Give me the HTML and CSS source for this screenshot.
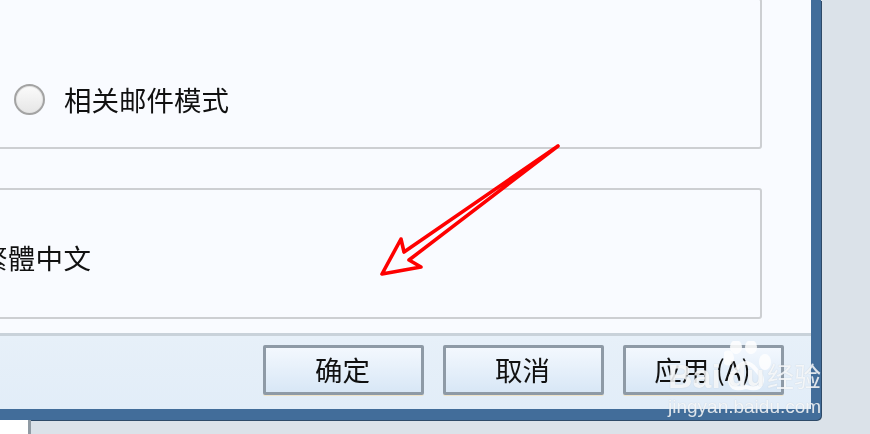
FILE: index.html
```html
<!DOCTYPE html>
<html lang="zh">
<head>
<meta charset="utf-8">
<title>设置</title>
<link rel="stylesheet" href="styles.css">
</head>
<body>
<div class="screen">
  <div class="dialog">
    <div class="body">
      <section class="panel panel-mode">
        <label class="option"><span class="radio"></span><span>相关邮件模式</span></label>
      </section>
      <section class="panel panel-lang">
        <span class="lang">繁體中文</span>
      </section>
    </div>
    <footer class="footer">
      <button class="btn">确定</button>
      <button class="btn">取消</button>
      <button class="btn">应用 (A)</button>
    </footer>
  </div>
  <div class="under">
    <div class="under-sheet"></div>
  </div>

  <svg class="arrow" width="870" height="434" viewBox="0 0 870 434" aria-hidden="true">
    <path d="M558 146 L404 252 L401 239 L382 274 L421 267 L409 260 Z" fill="none" stroke="#fe0000" stroke-width="3.6" stroke-linejoin="round"/>
  </svg>

  <div class="mark">
    <svg class="paw" width="50" height="56" viewBox="0 0 50 56" aria-hidden="true">
      <ellipse cx="4" cy="17" rx="6" ry="7.5"/>
      <ellipse cx="12" cy="6" rx="6" ry="7"/>
      <ellipse cx="27" cy="6" rx="6" ry="7"/>
      <ellipse cx="41" cy="21" rx="6" ry="8"/>
      <path d="M22 22c6 0 8 5 12 9 4 4 5 8 3 12-2 5-8 5-15 3-7 2-13 2-15-3-2-4-1-8 3-12 4-4 6-9 12-9z" fill="none" stroke="#fff" stroke-width="4"/>
    </svg>
    <span class="mark-bai">Bai</span>
    <span class="mark-du">du</span>
    <span class="mark-jy">经验</span>
    <span class="mark-url">jingyan.baidu.com</span>
  </div>
</div>
</body>
</html>
```

FILE: styles.css
```css
* { box-sizing: border-box; }

html, body {
  margin: 0;
  padding: 0;
  width: 870px;
  height: 434px;
  overflow: hidden;
  background: #dbe2e9;
}

.screen {
  position: relative;
  width: 870px;
  height: 434px;
  overflow: hidden;
  font-family: "Noto Sans CJK SC", "Noto Sans CJK TC", "Liberation Sans", sans-serif;
  color: #111;
  filter: blur(0.35px);
}

.dialog {
  display: flex;
  flex-direction: column;
  width: 821px;
  height: 420px;
  background: #f9fbff;
  border-right: 10px solid #426d9a;
  border-bottom: 11px solid #426d9a;
  border-bottom-right-radius: 5px;
  box-shadow: 1px 1px 0 #2e4a68;
}

.body {
  flex: 1;
  display: flex;
  flex-direction: column;
  gap: 39px;
  padding-right: 49px;
  margin-left: -20px;
}

.panel {
  border: 2px solid #cdcfd2;
  border-radius: 3px;
}

.panel-mode {
  height: 151px;
  margin-top: -2px;
  padding: 83px 0 0 32px;
}

.panel-lang {
  height: 131px;
  padding: 49px 0 0 0;
  position: relative;
}

.option {
  display: flex;
  align-items: center;
  gap: 19px;
  height: 32px;
  font-size: 27.5px;
  line-height: 32px;
}

.radio {
  width: 31px;
  height: 31px;
  border-radius: 50%;
  border: 2px solid #a3a3a3;
  background: linear-gradient(#fbfbfb, #e6e6e6);
  box-shadow: inset 0 0 0 1px #e4e4e4;
}

.lang {
  display: block;
  margin-left: -2px;
  font-size: 27.5px;
  line-height: 36px;
  letter-spacing: 0.3px;
}

.footer {
  flex: none;
  display: flex;
  justify-content: flex-end;
  gap: 19px;
  height: 76px;
  padding: 9px 27px 0 0;
  background: linear-gradient(#e7f0f9, #e2edf8);
  border-top: 3px solid #c9d2da;
}

.btn {
  width: 161px;
  height: 50px;
  padding: 0 2px 2px 0;
  border: 3px solid #8e9aa6;
  border-radius: 2px;
  background: linear-gradient(#f3f8fe, #d8e7f6);
  box-shadow: 0 1px 0 #eee3c8;
  font-family: inherit;
  font-size: 27.5px;
  color: #111;
}

.under {
  height: 14px;
}

.under-sheet {
  width: 31px;
  height: 14px;
  background: #fff;
  border-right: 3px solid #8f9aa3;
}

.arrow {
  position: absolute;
  left: 0;
  top: 0;
}

.mark {
  position: absolute;
  left: 660px;
  top: 338px;
  width: 170px;
  height: 85px;
  color: rgba(255, 255, 255, 0.82);
  font-family: "Liberation Sans", sans-serif;
  text-shadow: 0 0 1px rgba(110, 125, 140, 0.35);
}

.paw {
  position: absolute;
  left: 64px;
  top: 3px;
  fill: #fff;
  opacity: 0.85;
}

.mark-bai {
  position: absolute;
  left: 8px;
  top: 18px;
  font-size: 34px;
  font-weight: 700;
  line-height: 40px;
}

.mark-du {
  position: absolute;
  left: 68px;
  top: 18px;
  font-size: 30px;
  font-weight: 700;
  line-height: 40px;
}

.mark-jy {
  position: absolute;
  left: 107px;
  top: 22px;
  font-family: "Noto Sans CJK SC", sans-serif;
  font-size: 27px;
  line-height: 32px;
  white-space: nowrap;
}

.mark-url {
  position: absolute;
  left: 8px;
  top: 57px;
  font-size: 19px;
  line-height: 24px;
  white-space: nowrap;
}
```
